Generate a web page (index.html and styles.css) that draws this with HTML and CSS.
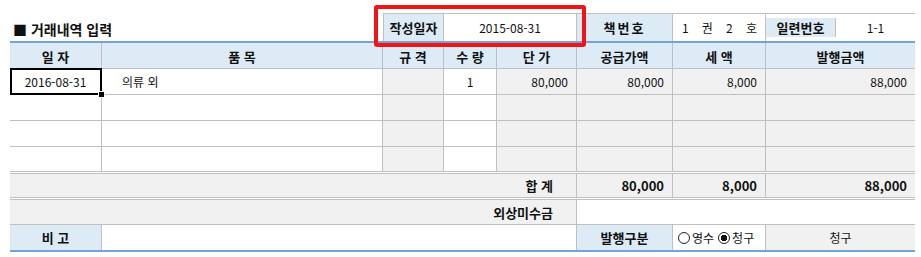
FILE: index.html
```html
<!DOCTYPE html>
<html lang="ko">
<head>
    <meta charset="UTF-8">
    <meta name="viewport" content="width=device-width, initial-scale=1.0">
    <title>거래내역 입력</title>
    <link rel="stylesheet" href="styles.css">
</head>
<body>
    <div class="sheet">
        <div class="row top">
            <div class="title">■ 거래내역 입력</div>
            <div class="cell label first">작성일자</div>
            <div class="cell value span2">2015-08-31</div>
            <div class="cell label wide">책번호</div>
            <div class="cell value book"><span>1</span><span>권</span><span>2</span><span>호</span></div>
            <div class="cell split">
                <div class="cell label serial">일련번호</div>
                <div class="cell value last">1-1</div>
            </div>
            <div class="highlight"></div>
        </div>

        <div class="row head">
            <div class="cell">일 자</div>
            <div class="cell">품 목</div>
            <div class="cell">규 격</div>
            <div class="cell">수 량</div>
            <div class="cell">단 가</div>
            <div class="cell">공급가액</div>
            <div class="cell">세 액</div>
            <div class="cell last">발행금액</div>
        </div>

        <div class="row item">
            <div class="cell center selected">2016-08-31<span class="handle"></span></div>
            <div class="cell name">의류 외</div>
            <div class="cell gray"></div>
            <div class="cell center">1</div>
            <div class="cell gray num">80,000</div>
            <div class="cell gray num">80,000</div>
            <div class="cell gray num">8,000</div>
            <div class="cell gray num last">88,000</div>
        </div>
        <div class="row item">
            <div class="cell"></div>
            <div class="cell"></div>
            <div class="cell gray"></div>
            <div class="cell"></div>
            <div class="cell gray"></div>
            <div class="cell gray"></div>
            <div class="cell gray"></div>
            <div class="cell gray last"></div>
        </div>
        <div class="row item">
            <div class="cell"></div>
            <div class="cell"></div>
            <div class="cell gray"></div>
            <div class="cell"></div>
            <div class="cell gray"></div>
            <div class="cell gray"></div>
            <div class="cell gray"></div>
            <div class="cell gray last"></div>
        </div>
        <div class="row item end">
            <div class="cell"></div>
            <div class="cell"></div>
            <div class="cell gray"></div>
            <div class="cell"></div>
            <div class="cell gray"></div>
            <div class="cell gray"></div>
            <div class="cell gray"></div>
            <div class="cell gray last"></div>
        </div>

        <div class="row total">
            <div class="cell gray sum-label">합 계</div>
            <div class="cell gray num">80,000</div>
            <div class="cell gray num">8,000</div>
            <div class="cell gray num last">88,000</div>
        </div>

        <div class="row due">
            <div class="cell gray sum-label">외상미수금</div>
            <div class="cell rest"></div>
        </div>

        <div class="row note">
            <div class="cell label">비 고</div>
            <div class="cell memo"></div>
            <div class="cell label">발행구분</div>
            <div class="cell radios">
                <span class="radio"></span>영수
                <span class="radio on"></span>청구
            </div>
            <div class="cell gray center last">청구</div>
        </div>
    </div>
</body>
</html>
```

FILE: styles.css
```css
body {
    margin: 0;
    font-family: 'Noto Sans CJK KR', 'Noto Sans', sans-serif;
    font-size: 12px;
    color: #111;
    background: #fff;
}
.sheet {
    padding: 13px 0 0 10px;
    width: 905px;
}
.row {
    display: grid;
    grid-template-columns: 92px 281px 61px 53px 80px 96px 93px 149px;
}
.cell {
    box-sizing: border-box;
    display: flex;
    align-items: center;
    justify-content: center;
    border-right: 1px solid #c0c0c0;
    white-space: nowrap;
}
.cell.last {
    border-right: none;
}
.gray {
    background: #f1f1f1;
}
.label {
    background: #ddebf7;
    font-weight: bold;
    font-size: 13px;
}
.center {
    justify-content: center;
}
.num {
    justify-content: flex-end;
    padding-right: 8px;
}

/* 상단 제목 / 작성 정보 */
.top {
    position: relative;
    height: 28px;
}
.title {
    grid-column: 1 / 3;
    display: flex;
    align-items: center;
    padding: 3px 0 0 3px;
    font-size: 14px;
    font-weight: bold;
}
.top .cell {
    border-top: 1px solid #c0c0c0;
}
.top .first {
    border-left: 1px solid #c0c0c0;
}
.span2 {
    grid-column: span 2;
}
.wide {
    letter-spacing: 2px;
}
.book {
    justify-content: space-between;
    padding: 0 8px 0 9px;
}
.split {
    display: grid;
    grid-template-columns: 70px 79px;
    border: none;
}
.split .cell {
    border-top: none;
}
.highlight {
    position: absolute;
    left: 364px;
    top: -8px;
    width: 212px;
    height: 42px;
    box-sizing: border-box;
    border: 4px solid #f01414;
    border-radius: 3px;
}

/* 표 머리 */
.head {
    border-top: 2px solid #72a4da;
    border-bottom: 1px solid #c0c0c0;
    background: #ddebf7;
    height: 25px;
    font-weight: bold;
    font-size: 13px;
}
.head .cell {
    padding-top: 2px;
}

/* 품목 행 */
.item {
    height: 25px;
    border-bottom: 1px solid #c0c0c0;
}
.item.end {
    height: 24px;
    border-bottom: none;
}
.name {
    justify-content: flex-start;
    padding-left: 20px;
}
.selected {
    position: relative;
}
.selected::after {
    content: '';
    position: absolute;
    left: 0;
    top: -1px;
    right: -1px;
    bottom: -1px;
    border: 2px solid #000;
}
.handle {
    position: absolute;
    right: -4px;
    bottom: -4px;
    width: 5px;
    height: 5px;
    background: #000;
    border: 1px solid #fff;
    z-index: 1;
}

/* 합계 */
.total {
    border-top: 3px double #c0c0c0;
    height: 23px;
    font-weight: bold;
    font-size: 13px;
}
.sum-label {
    grid-column: 1 / 6;
    justify-content: flex-end;
    padding-right: 23px;
    font-weight: bold;
    font-size: 13px;
}
.due {
    border-top: 3px double #c0c0c0;
    border-bottom: 1px solid #c0c0c0;
    height: 24px;
}
.rest {
    grid-column: 6 / 9;
    border-right: none;
}

/* 비고 */
.note {
    height: 25px;
    border-bottom: 2px solid #72a4da;
}
.memo {
    grid-column: 2 / 6;
}
.radios {
    justify-content: flex-start;
    padding-left: 5px;
    gap: 1px;
}
.radio {
    box-sizing: border-box;
    display: inline-block;
    width: 12px;
    height: 12px;
    border: 1px solid #222;
    border-radius: 50%;
    background: #fff;
    margin-right: 1px;
}
.radio.on {
    background: radial-gradient(circle, #111 0 3px, #fff 3.5px);
    margin-left: 3px;
}
```
